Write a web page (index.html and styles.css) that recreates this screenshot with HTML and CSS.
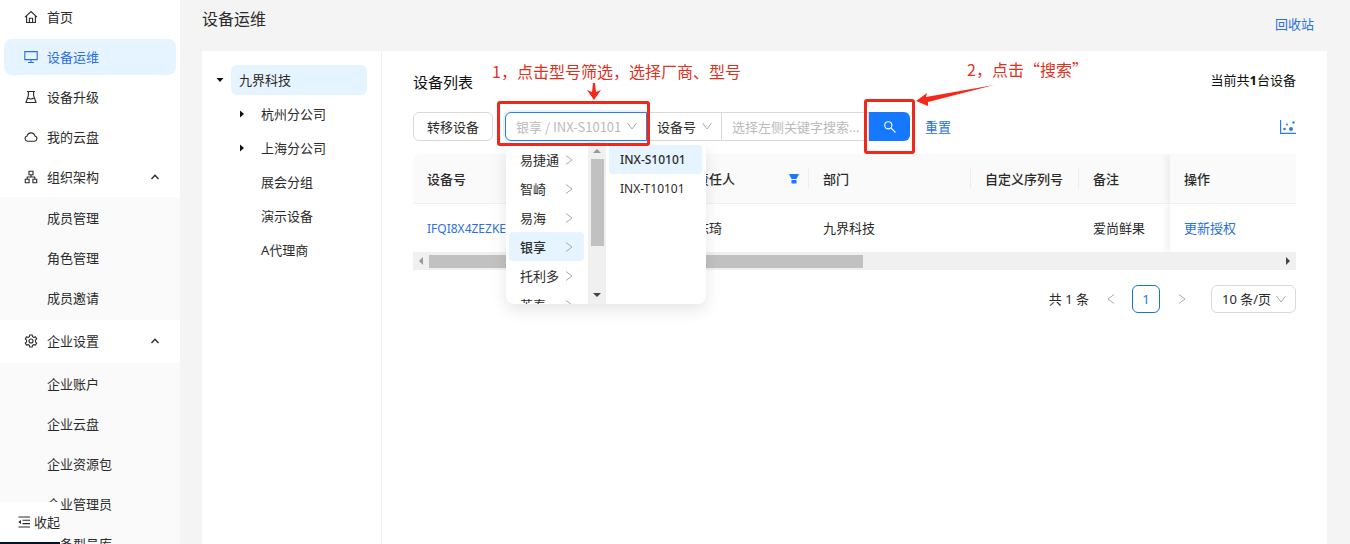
FILE: index.html
```html
<!DOCTYPE html>
<html lang="zh-CN">

<head>
    <meta charset="UTF-8">
    <meta name="viewport" content="width=device-width, initial-scale=1.0">
    <title>设备运维</title>
    <link rel="stylesheet" href="styles.css">
</head>

<body>
    <aside class="sidebar">
        <nav class="menu">
            <a class="menu-item" href="#">
                <svg class="icon" viewBox="0 0 14 14"><path d="M1 7.2 7 1.5l6 5.7M2.6 6v6.5h8.8V6M5.4 12.5V8.3h3.2v4.2" /></svg>
                首页
            </a>
            <a class="menu-item active" href="#">
                <svg class="icon" viewBox="0 0 14 14"><path d="M.8 1.6h12.4v8H.8zM7 9.6v2.8M4 12.5h6" /></svg>
                设备运维
            </a>
            <a class="menu-item" href="#">
                <svg class="icon" viewBox="0 0 14 14"><path d="M3 1.5h8M4.4 1.5v4L2 12.5h10L9.6 5.500v-4M3.300 8.600c1.500-.9 2.700.9 4.200.3s1.500-.8 3-.5" /></svg>
                设备升级
            </a>
            <a class="menu-item" href="#">
                <svg class="icon" viewBox="0 0 14 14"><path d="M3.500 11.300a2.700 2.700 0 0 1-.4-5.300 4 4 0 0 1 7.800 0 2.700 2.700 0 0 1-.4 5.300z" /></svg>
                我的云盘
            </a>
            <div class="menu-group">
                <a class="menu-item menu-title" href="#">
                    <svg class="icon" viewBox="0 0 14 14"><path d="M5 1.300h4v3.400H5zM1.300 9.200h3.800v3.500H1.300zM8.900 9.200h3.800v3.500H8.900zM7 4.700V7M3.200 9.200V7h7.600v2.200" /></svg>
                    组织架构
                    <svg class="arrow" viewBox="0 0 10 10"><path d="M1.500 7 5 3.300 8.500 7" /></svg>
                </a>
                <div class="submenu">
                    <a class="menu-item" href="#">成员管理</a>
                    <a class="menu-item" href="#">角色管理</a>
                    <a class="menu-item" href="#">成员邀请</a>
                </div>
            </div>
            <div class="menu-group">
                <a class="menu-item menu-title" href="#">
                    <svg class="icon" viewBox="0 0 14 14"><path d="M5.800 1h2.400l.4 1.700 1.200.7 1.700-.5 1.200 2.100-1.300 1.200v1.600l1.300 1.200-1.200 2.100-1.700-.5-1.200.7-.4 1.700H5.800l-.4-1.700-1.200-.7-1.700.5L1.300 9l1.300-1.200V6.200L1.300 5l1.200-2.100 1.700.5 1.200-.7z" /><circle cx="7" cy="7" r="2" /></svg>
                    企业设置
                    <svg class="arrow" viewBox="0 0 10 10"><path d="M1.500 7 5 3.300 8.500 7" /></svg>
                </a>
                <div class="submenu">
                    <a class="menu-item" href="#">企业账户</a>
                    <a class="menu-item" href="#">企业云盘</a>
                    <a class="menu-item" href="#">企业资源包</a>
                    <a class="menu-item" href="#">企业管理员</a>
                    <a class="menu-item" href="#">设备型号库</a>
                </div>
            </div>
        </nav>
        <button class="collapse" type="button">
            <svg class="icon" viewBox="0 0 14 14"><path d="M.5 2H12M4.500 5.300H12M4.500 8.600H12M.5 12H12" /><path class="solid" d="M.3 7 3 4.900v4.200z" /></svg>
            收起
        </button>
    </aside>

    <main class="main">
        <header class="page-header">
            <h1>设备运维</h1>
            <a class="link" href="#">回收站</a>
        </header>

        <div class="card">
            <ul class="tree">
                <li class="tree-row">
                    <svg class="caret" viewBox="0 0 8 8"><path d="M.5 2h7L4 6z" /></svg>
                    <span class="node selected">九界科技</span>
                </li>
                <li class="tree-row child">
                    <svg class="caret" viewBox="0 0 8 8"><path d="M2 .5v7L6 4z" /></svg>
                    <span class="node">杭州分公司</span>
                </li>
                <li class="tree-row child">
                    <svg class="caret" viewBox="0 0 8 8"><path d="M2 .5v7L6 4z" /></svg>
                    <span class="node">上海分公司</span>
                </li>
                <li class="tree-row child"><span class="caret"></span><span class="node">展会分组</span></li>
                <li class="tree-row child"><span class="caret"></span><span class="node">演示设备</span></li>
                <li class="tree-row child"><span class="caret"></span><span class="node">A代理商</span></li>
            </ul>

            <section class="content">
                <div class="content-header">
                    <h2>设备列表</h2>
                    <span>当前共<b>1</b>台设备</span>
                </div>

                <div class="toolbar">
                    <button class="btn" type="button">转移设备</button>
                    <div class="search-group">
                        <div class="field cascader">
                            <input type="text" placeholder="银享 / INX-S10101" aria-label="型号筛选" readonly>
                            <svg class="chevron" viewBox="0 0 10 10"><path d="M.5 2 5 8l4.500-6" /></svg>

                            <div class="dropdown">
                                <ul class="options">
                                    <li>易捷通<svg class="chevron" viewBox="0 0 10 10"><path d="M2 .5 8 5 2 9.500" /></svg></li>
                                    <li>智崎<svg class="chevron" viewBox="0 0 10 10"><path d="M2 .5 8 5 2 9.500" /></svg></li>
                                    <li>易海<svg class="chevron" viewBox="0 0 10 10"><path d="M2 .5 8 5 2 9.500" /></svg></li>
                                    <li class="selected">银享<svg class="chevron" viewBox="0 0 10 10"><path d="M2 .5 8 5 2 9.500" /></svg></li>
                                    <li>托利多<svg class="chevron" viewBox="0 0 10 10"><path d="M2 .5 8 5 2 9.500" /></svg></li>
                                    <li>英泰<svg class="chevron" viewBox="0 0 10 10"><path d="M2 .5 8 5 2 9.500" /></svg></li>
                                </ul>
                                <div class="scroll-y">
                                    <svg class="scroll-arrow light" viewBox="0 0 8 8"><path d="M0 6h8L4 2z" /></svg>
                                    <div class="thumb"></div>
                                    <svg class="scroll-arrow" viewBox="0 0 8 8"><path d="M0 2h8L4 6z" /></svg>
                                </div>
                                <ul class="options models">
                                    <li class="selected">INX-S10101</li>
                                    <li>INX-T10101</li>
                                </ul>
                            </div>
                        </div>
                        <div class="field key">
                            <select aria-label="搜索字段">
                                <option>设备号</option>
                            </select>
                            <svg class="chevron" viewBox="0 0 10 10"><path d="M.5 2 5 8l4.500-6" /></svg>
                        </div>
                        <input class="keyword" type="text" placeholder="选择左侧关键字搜索..." aria-label="关键字">
                        <button class="search-btn" type="button" aria-label="搜索">
                            <svg class="icon" viewBox="0 0 14 14"><circle cx="5.300" cy="5.300" r="3.600" /><path d="m8 8 4.500 4.500" /></svg>
                        </button>
                    </div>
                    <a class="link" href="#">重置</a>
                    <svg class="chart" viewBox="0 0 16 16"><path d="M.6 1v13.400H16" /><circle cx="4.500" cy="10" r="1.300" /><circle cx="7" cy="5.500" r="1" /><circle cx="11" cy="10" r="2" /><circle cx="13.500" cy="3.500" r="1.200" /></svg>
                </div>

                <table class="table">
                    <colgroup>
                        <col class="col-no">
                        <col class="col-owner">
                        <col class="col-dept">
                        <col class="col-serial">
                        <col class="col-note">
                        <col class="col-action">
                    </colgroup>
                    <thead>
                        <tr>
                            <th>设备号</th>
                            <th>
                                <div class="th-filter">
                                    责任人
                                    <svg class="filter" viewBox="0 0 10 10"><path d="M0 0h10L7.500 5h-5zM2.500 6h5v3.500h-5z" /></svg>
                                </div>
                            </th>
                            <th>部门</th>
                            <th>自定义序列号</th>
                            <th>备注</th>
                            <th class="fixed">操作</th>
                        </tr>
                    </thead>
                    <tbody>
                        <tr>
                            <td><a class="link device-no" href="#">IFQI8X4ZEZKE</a></td>
                            <td>陈琦</td>
                            <td>九界科技</td>
                            <td></td>
                            <td>爱尚鲜果</td>
                            <td class="fixed"><a class="link" href="#">更新授权</a></td>
                        </tr>
                    </tbody>
                </table>
                <div class="scroll-x">
                    <svg class="scroll-arrow light" viewBox="0 0 8 8"><path d="M6 0v8L2 4z" /></svg>
                    <div class="track"><div class="thumb"></div></div>
                    <svg class="scroll-arrow" viewBox="0 0 8 8"><path d="M2 0v8l4-4z" /></svg>
                </div>

                <div class="pagination">
                    <span>共 1 条</span>
                    <button class="page-nav" type="button" aria-label="上一页"><svg class="chevron" viewBox="0 0 10 10"><path d="M8 .5 2 5l6 4.500" /></svg></button>
                    <button class="page-num" type="button">1</button>
                    <button class="page-nav" type="button" aria-label="下一页"><svg class="chevron" viewBox="0 0 10 10"><path d="M2 .5 8 5 2 9.500" /></svg></button>
                    <div class="field page-size">
                        <select aria-label="每页条数">
                            <option>10 条/页</option>
                        </select>
                        <svg class="chevron" viewBox="0 0 10 10"><path d="M.5 2 5 8l4.500-6" /></svg>
                    </div>
                </div>
            </section>
        </div>
    </main>

    <!-- step annotations -->
    <div class="note note-filter">1，点击型号筛选，选择厂商、型号</div>
    <svg class="note-arrow arrow-down" viewBox="0 0 14 18"><path d="M6 0h2l1 9 5-2-7 10-7-10 5 2z" /></svg>
    <div class="mark mark-filter"></div>
    <div class="note note-search">2，点击“搜索”</div>
    <svg class="note-arrow arrow-left" viewBox="0 0 78 22"><path d="M0 16 11 8l-1 4L78 0 12 17l0 4z" /></svg>
    <div class="mark mark-search"></div>
</body>

</html>
```

FILE: styles.css
```css
* {
    box-sizing: border-box;
}

body {
    margin: 0;
    display: flex;
    height: 100vh;
    overflow: hidden;
    position: relative;
    background-color: #f4f4f4;
    color: #2a2a2a;
    font-family: "Noto Sans", "Noto Sans CJK SC", sans-serif;
    font-size: 13px;
    line-height: 20px;
}

h1,
h2,
ul {
    margin: 0;
    padding: 0;
    font-weight: 400;
    list-style: none;
}

button,
input,
select {
    font: inherit;
    color: inherit;
}

a {
    color: inherit;
    text-decoration: none;
}

.link {
    color: #2b6fe0;
}

svg {
    flex: none;
    fill: none;
    stroke: currentColor;
}

.icon {
    width: 14px;
    height: 14px;
    stroke-width: 1.1;
}

.chevron {
    width: 10px;
    height: 10px;
    color: #aaa;
}

/* Sidebar */
.sidebar {
    position: relative;
    flex: none;
    width: 180px;
    overflow: hidden;
    background-color: #fff;
}

.menu {
    margin-top: -3px;
}

.menu-item {
    display: flex;
    align-items: center;
    gap: 9px;
    height: 36px;
    margin: 2px 4px;
    padding: 0 20px;
    border-radius: 8px;
}

.menu-item + .menu-item,
.menu-group .menu-item {
    margin-top: 4px;
    margin-bottom: 0;
}

.menu-item.active {
    background-color: #e6f4ff;
    color: #2b6fe0;
}

.menu .menu-title {
    margin: 4px 4px 2px;
}

.menu-group + .menu-group .menu-title {
    margin: 3px 4px 4px;
}

.arrow {
    width: 10px;
    height: 10px;
    margin-left: auto;
    margin-right: -4px;
    stroke-width: 1.3;
}

.submenu {
    padding: 1px 0 2px;
    background-color: #fafafa;
}

.submenu .menu-item {
    margin: 0 4px;
    height: 40px;
    padding-left: 43px;
}

.collapse {
    position: absolute;
    left: 0;
    bottom: 0;
    display: flex;
    align-items: center;
    gap: 2px;
    width: 60px;
    height: 42px;
    padding: 0 0 0 18px;
    border: 0;
    border-bottom: 2px solid #001529;
    background-color: #fff;
    white-space: nowrap;
}

.solid {
    fill: currentColor;
    stroke: none;
}

/* Page */
.main {
    flex: 1;
    min-width: 0;
    display: flex;
    flex-direction: column;
    padding: 0 23px 0 22px;
}

.page-header {
    display: flex;
    justify-content: space-between;
    height: 51px;
    padding: 7px 13px 0 0;
}

.page-header h1 {
    font-size: 16px;
    line-height: 24px;
}

.page-header .link {
    padding-top: 7px;
}

.card {
    flex: 1;
    display: flex;
    background-color: #fff;
}

.tree {
    flex: none;
    width: 180px;
    padding: 14px 14px 0;
    border-right: 1px solid #eee;
}

.tree-row {
    display: flex;
    align-items: center;
    gap: 7px;
    height: 30px;
    margin-bottom: 4px;
}

.tree-row.child {
    padding-left: 22px;
}

.caret {
    width: 8px;
    height: 8px;
    fill: #111;
    stroke: none;
}

.node {
    flex: 1;
    padding: 5px 8px;
    border-radius: 6px;
}

.node.selected {
    background-color: #e6f4ff;
}

.content {
    flex: 1;
    min-width: 0;
    padding: 19px 31px 0;
}

.content-header {
    display: flex;
    justify-content: space-between;
    height: 42px;
    color: #111;
}

.content-header h2 {
    font-size: 15px;
    line-height: 24px;
}

/* Toolbar */
.toolbar {
    display: flex;
    align-items: center;
    height: 29px;
    margin-bottom: 13px;
}

.btn {
    width: 80px;
    height: 29px;
    padding: 0;
    border: 1px solid #d9d9d9;
    border-radius: 6px;
    background-color: #fff;
}

.search-group {
    display: flex;
    margin: 0 15px 0 12px;
}

.field {
    position: relative;
    height: 29px;
}

.field > .chevron {
    position: absolute;
    right: 10px;
    top: 9px;
    pointer-events: none;
}

.field input,
.field select,
.keyword {
    width: 100%;
    height: 100%;
    padding: 0 10px;
    border: 1px solid #d9d9d9;
    border-radius: 0;
    background-color: #fff;
    appearance: none;
    outline: none;
}

input::placeholder {
    color: #bbb;
    opacity: 1;
}

.cascader {
    width: 142px;
}

.cascader input {
    border-color: #2b7de9;
    border-radius: 6px 0 0 6px;
    box-shadow: 0 0 0 2px #e6f4ff;
    font-family: "Noto Sans CJK SC", sans-serif;
}

.key {
    width: 75px;
}

.key select {
    border-left: 0;
}

.search-group .keyword {
    width: 147px;
    height: 29px;
    padding-right: 0;
    border-left: 0;
}

.search-btn {
    display: flex;
    align-items: center;
    justify-content: center;
    width: 41px;
    height: 29px;
    padding: 0;
    border: 0;
    border-radius: 0 6px 6px 0;
    background-color: #1677ff;
    color: #fff;
}

.chart {
    width: 16px;
    height: 16px;
    margin-left: auto;
    color: #2b7de9;
    stroke-width: 1.2;
}

.chart circle {
    fill: currentColor;
    stroke: none;
}

/* Cascader popup */
.dropdown {
    position: absolute;
    top: 30px;
    left: 1px;
    z-index: 2;
    display: flex;
    width: 200px;
    height: 162px;
    overflow: hidden;
    border-radius: 8px;
    background-color: #fff;
    box-shadow: 0 6px 16px rgba(0, 0, 0, 0.1);
    clip-path: inset(0 -30px -30px -30px);
}

.options {
    width: 82px;
    padding: 3px 4px 0 3px;
}

.options li {
    display: flex;
    align-items: center;
    justify-content: space-between;
    height: 29px;
    padding: 0 10px 0 11px;
    border-radius: 4px;
    white-space: nowrap;
}

.options .selected {
    background-color: #e6f4ff;
    font-weight: 500;
}

.options.models {
    flex: 1;
    font-size: 12px;
}

.scroll-y {
    display: flex;
    flex-direction: column;
    align-items: center;
    width: 18px;
    padding: 5px 0;
    background-color: #f0f0f0;
}

.scroll-y .thumb {
    width: 13px;
    height: 87px;
    margin: 4px 0 auto;
    background-color: #c1c1c1;
}

.scroll-arrow {
    width: 8px;
    height: 8px;
    fill: #444;
    stroke: none;
}

.scroll-arrow.light {
    fill: #999;
}

/* Table */
.table {
    width: 100%;
    table-layout: fixed;
    border-collapse: separate;
    border-spacing: 0;
}

.col-no {
    width: 269px;
}

.col-owner {
    width: 127px;
}

.col-dept {
    width: 162px;
}

.col-serial {
    width: 108px;
}

.col-note {
    width: 91px;
}

th,
td {
    position: relative;
    padding: 0 14px;
    text-align: left;
    white-space: nowrap;
}

th {
    height: 50px;
    border-bottom: 1px solid #f0f0f0;
    background-color: #fafafa;
    font-weight: 500;
}

th:first-child {
    border-top-left-radius: 8px;
}

/* column divider */
th:nth-child(n+2):nth-child(-n+4)::after {
    content: "";
    position: absolute;
    top: 14px;
    right: 0;
    width: 1px;
    height: 21px;
    background-color: #eee;
}

td {
    height: 48px;
}

.device-no {
    font-size: 12px;
}

.fixed {
    box-shadow: -4px 0 6px rgba(0, 0, 0, 0.05);
    clip-path: inset(0 0 0 -10px);
}

.th-filter {
    display: flex;
    align-items: center;
    justify-content: space-between;
    margin-right: -4px;
}

.filter {
    width: 10px;
    height: 10px;
    fill: #1677ff;
    stroke: none;
}

.scroll-x {
    display: flex;
    align-items: center;
    gap: 4px;
    height: 18px;
    padding: 0 4px;
    background-color: #f0f0f0;
}

.scroll-x .track {
    flex: 1;
}

.scroll-x .thumb {
    width: 51%;
    height: 13px;
    background-color: #c1c1c1;
}

.pagination {
    display: flex;
    align-items: center;
    justify-content: flex-end;
    margin-top: 15px;
}

.page-nav {
    width: 43px;
    padding: 0;
    border: 0;
    background: none;
    line-height: 10px;
}

.page-num {
    width: 28px;
    height: 28px;
    padding: 0;
    border: 1px solid #1677d0;
    border-radius: 6px;
    background-color: #fff;
    color: #1677ff;
}

.page-size {
    width: 85px;
    height: 28px;
    margin-left: 8px;
}

.page-size select {
    border-radius: 6px;
}

/* Annotations */
.note,
.note-arrow,
.mark {
    position: absolute;
    z-index: 3;
}

.note {
    color: #e0301e;
    font-family: "Noto Sans CJK SC", sans-serif;
    font-size: 16px;
    line-height: 24px;
    white-space: nowrap;
}

.note-filter {
    left: 492px;
    top: 59px;
}

.note-search {
    left: 967px;
    top: 57px;
}

.note-arrow {
    fill: #f5281a;
    stroke: none;
}

.arrow-down {
    left: 587px;
    top: 83px;
    width: 14px;
    height: 18px;
}

.arrow-left {
    left: 916px;
    top: 85px;
    width: 78px;
    height: 22px;
}

.mark {
    border: 3px solid #f0281c;
    border-radius: 3px;
}

.mark-filter {
    left: 497px;
    top: 101px;
    width: 153px;
    height: 45px;
}

.mark-search {
    left: 864px;
    top: 99px;
    width: 51px;
    height: 55px;
}
```
